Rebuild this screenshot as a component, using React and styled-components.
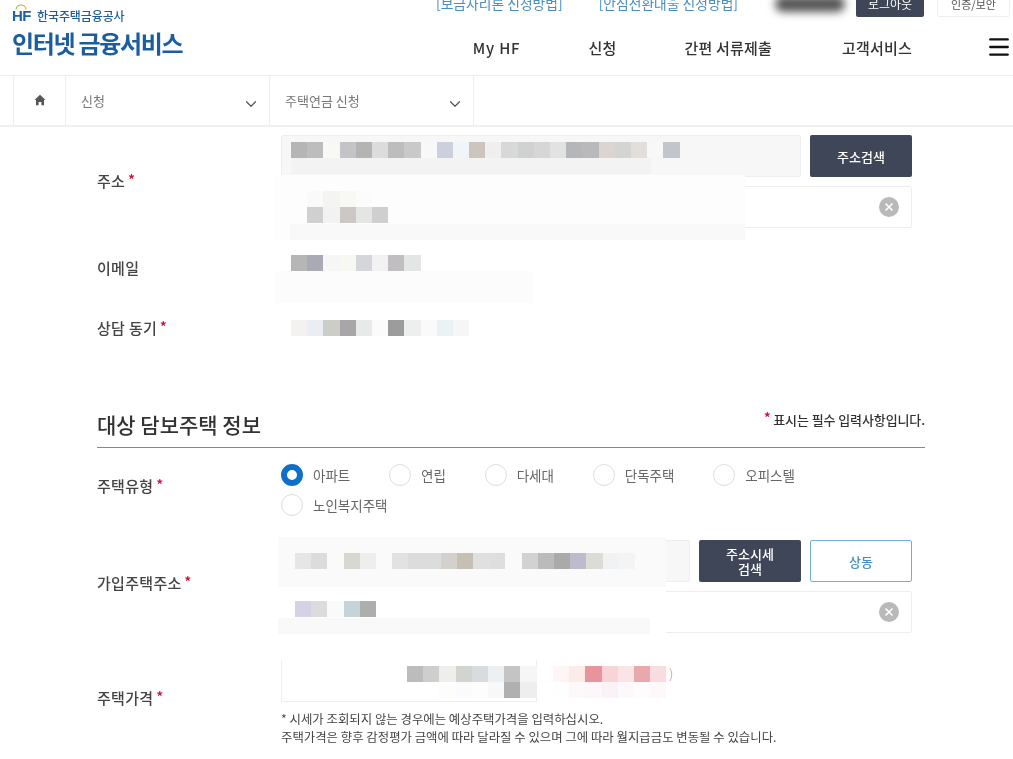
import React from "react";
import styled, { createGlobalStyle } from "styled-components";
import { ChevronDown, Menu } from "lucide-react";

const GlobalStyle = createGlobalStyle`
  html, body {
    margin: 0;
    padding: 0;
    background: #fff;
    overflow: hidden;
    font-family: "Noto Sans CJK KR", "Noto Sans", sans-serif;
    color: #333;
  }
  * { box-sizing: border-box; }
`;

const Page = styled.div`
  width: 1013px;
  height: 759px;
  overflow: hidden;
  filter: blur(0.5px);
`;

const Header = styled.header`
  display: flex;
  height: 76px;
  border-bottom: 1px solid #eeeeee;
`;
const Brand = styled.div`
  width: 300px;
  padding: 6px 0 0 12px;
`;
const OrgLine = styled.div`
  display: flex;
  align-items: center;
  gap: 6px;
  height: 18px;
  color: #1c5c9c;
  font-size: 12px;
  letter-spacing: -0.1px;
  font-weight: 500;
`;
const HfMark = styled.span`
  position: relative;
  font-family: "Liberation Sans", sans-serif;
  font-size: 15px;
  font-weight: 700;
  letter-spacing: -0.5px;
  color: #1c62a8;
`;
const HfArc = styled.svg`
  position: absolute;
  left: 3px;
  top: -3px;
`;
const ServiceName = styled.div`
  margin-top: 2px;
  font-size: 24px;
  line-height: 34px;
  font-weight: 700;
  letter-spacing: -1.3px;
  color: #1b5e9f;
`;
const HeaderRight = styled.div`
  flex: 1;
  display: flex;
  flex-direction: column;
`;
const UtilRow = styled.div`
  display: flex;
  justify-content: flex-end;
  align-items: flex-end;
  height: 17px;
  padding-right: 3px;
`;
const UtilLink = styled.a`
  margin-right: ${(p) => p.$gap}px;
  margin-bottom: 5px;
  font-size: 13.8px;
  line-height: 18px;
  color: #4a8cc4;
  white-space: nowrap;
`;
const Smudge = styled.div`
  width: 70px;
  height: 16px;
  margin-right: 11px;
  margin-bottom: 5px;
  border-radius: 8px;
  background: #555;
  filter: blur(4px);
`;
const LogoutButton = styled.button`
  width: 68px;
  height: 26px;
  margin-right: 13px;
  border: 0;
  border-radius: 2px;
  padding: 0;
  background: #3f4658;
  color: #fff;
  font: 400 12px/16px "Noto Sans CJK KR", sans-serif;
`;
const AuthButton = styled.button`
  width: 73px;
  height: 26px;
  border: 1px solid #eeeeee;
  border-radius: 2px;
  padding: 0;
  background: #fff;
  color: #555;
  font: 400 11px/16px "Noto Sans CJK KR", sans-serif;
`;
const NavRow = styled.nav`
  display: flex;
  justify-content: flex-end;
  align-items: center;
  gap: 68px;
  height: 59px;
  padding: 2px 1px 0 0;
`;
const NavItem = styled.a`
  margin-left: ${(p) => p.$left || 0}px;
  font-size: 15px;
  font-weight: 500;
  letter-spacing: 0.2px;
  color: #333;
  white-space: nowrap;
  &:first-child {
    letter-spacing: 0.8px;
  }
`;
const Burger = styled(Menu)`
  margin-left: 6px;
  color: #111;
`;

const Crumbs = styled.div`
  display: flex;
  height: 51px;
  padding-left: 13px;
  border-bottom: 2px solid #f0f0f0;
`;
const HomeCell = styled.div`
  width: 52px;
  display: flex;
  justify-content: center;
  padding-top: 18px;
  border-left: 1px solid #eeeeee;
`;
const CrumbCell = styled.div`
  width: 204px;
  display: flex;
  justify-content: space-between;
  padding: 16px 9px 0 15px;
  border-left: 1px solid #eeeeee;
  font-size: 13px;
  line-height: 18px;
  color: #777;
  &:last-child {
    width: 205px;
    border-right: 1px solid #eeeeee;
  }
`;
const CrumbChevron = styled(ChevronDown)`
  margin-top: 3px;
  color: #555;
`;

const Row = styled.div`
  display: grid;
  grid-template-columns: 184px 1fr;
  align-items: center;
  padding: 0 101px 0 97px;
  margin-top: ${(p) => p.$top || 0}px;
`;
const Label = styled.div`
  padding-bottom: ${(p) => p.$lift || 0}px;
  font-size: 15px;
  font-weight: 500;
  letter-spacing: 0.3px;
  color: #444;
`;
const Req = styled.span`
  margin-left: 3px;
  color: #d0103a;
  font-size: 13px;
  font-weight: 700;
  vertical-align: 3px;
`;
const Field = styled.div`
  position: relative;
  height: ${(p) => (p.$height ? `${p.$height}px` : "auto")};
`;
const InputLine = styled.div`
  display: flex;
  gap: 9px;
  margin-top: ${(p) => p.$top || 0}px;
`;
const ReadInput = styled.div`
  flex: 1;
  height: 42px;
  border: 1px solid #eeeeee;
  border-radius: 2px;
  background: #f7f7f7;
`;
const ClearInput = styled.div`
  flex: 1;
  height: 42px;
  display: flex;
  justify-content: flex-end;
  align-items: center;
  padding-right: 12px;
  border: 1px solid #eeeeee;
  border-radius: 2px;
  background: #fff;
`;
const DarkButton = styled.button`
  width: 102px;
  height: 42px;
  border: 0;
  border-radius: 2px;
  padding: 0 20px;
  background: #3f4658;
  color: #fff;
  font: 500 13px/15px "Noto Sans CJK KR", sans-serif;
`;
const OutlineButton = styled.button`
  width: 102px;
  height: 42px;
  border: 1px solid #6fb0d4;
  border-radius: 2px;
  background: #fff;
  color: #3f8fc0;
  font: 500 13px/15px "Noto Sans CJK KR", sans-serif;
`;

// blurred-out personal data sits over the inputs
const Patch = styled.div`
  position: absolute;
  left: ${(p) => p.$x}px;
  top: ${(p) => p.$y}px;
  width: ${(p) => p.$w}px;
  height: ${(p) => p.$h}px;
  background: ${(p) => p.$bg || "#fdfdfd"};
`;
const Mosaic = styled.div`
  position: absolute;
  left: ${(p) => p.$x}px;
  top: ${(p) => p.$y}px;
  display: flex;
  flex-direction: column;
`;
const MosaicRow = styled.div`
  display: flex;
`;
const MosaicCell = styled.i`
  display: block;
  width: 16.2px;
  height: 16px;
  background: ${(p) => p.$c};
`;
const PriceInput = styled.div`
  width: 256px;
  height: 42px;
  border: 1px solid #eeeeee;
  border-top: 0;
  background: #fff;
`;
const PinkParen = styled.span`
  position: absolute;
  left: 388px;
  top: 5px;
  font-size: 13px;
  line-height: 18px;
  color: #e8a0a8;
`;
const Note = styled.p`
  margin: 8px 0 0;
  font-size: 12.4px;
  line-height: 18px;
  color: #444;
  white-space: nowrap;
`;

const SectionHead = styled.div`
  display: flex;
  justify-content: space-between;
  height: 41px;
  margin: 50px 88px 0 97px;
  border-bottom: 1px solid #888888;
`;
const SectionTitle = styled.h2`
  margin: 0;
  font-size: 21px;
  line-height: 34px;
  font-weight: 500;
  color: #333;
`;
const RequiredNote = styled.div`
  font-size: 13px;
  line-height: 20px;
  font-weight: 500;
  letter-spacing: -0.1px;
  color: #333;
`;
const RadioGroup = styled.div`
  display: flex;
  flex-wrap: wrap;
  gap: 8px 38.8px;
`;
const RadioItem = styled.label`
  display: flex;
  align-items: center;
  gap: 10px;
  height: 22px;
  font-size: 13.5px;
  color: #666;
`;
const RadioDot = styled.span`
  width: 22px;
  height: 22px;
  border-radius: 50%;
  background: #fff;
  border: ${(p) => (p.$on ? "6px solid #0f6fc6" : "1px solid #dddddd")};
`;

const MASKS = {
  address: [
    ["#b5b5b5", "#bdbdbd", "#f8f8f4", "#c4c4c8", "#b4b4b4", "#dcdcdc", "#bdbdbd", "#c9c9c9", "#f8f8f8", "#cbd0dc", "#eef6f8", "#cdc4be", "#f0efef", "#d8d8d8", "#cfd2d0", "#d6d6d6", "#e2e2e2", "#b5b6ba", "#b9b9bb", "#dcd4ce", "#d4d5d2", "#e2dfda", "#f8f8f8", "#c0c6cb"],
  ],
  detail: [
    ["#fdfdfd", "#fafafa", "#f4f4f2", "#f8f8f4", "#fcfcfc"],
    ["#fdfdfd", "#d0d0d0", "#f2f2f2", "#ccc8c6", "#e4e6e4", "#cfcfcf"],
  ],
  email: [
    ["#b6b6b6", "#aaaab4", "#f6f6f6", "#f8f8f2", "#d4d6da", "#f2f2f2", "#c0bec0", "#e4e6e6"],
  ],
  consult: [
    ["#f4f2f0", "#eaeef2", "#ccccc8", "#a8a6a8", "#e8eaea", "#fbfbfb", "#9c9c9c", "#ecefee", "#fafafa", "#eaf2f6", "#f6f6f6"],
  ],
  house: [
    ["#e6e6e6", "#dcdcdc", "#fafafa", "#d8d8d2", "#eeeeee", "#fafafa", "#e2e2e4", "#dcdcdc", "#dcdcdc", "#d4d0cc", "#c6bfb4", "#e0e0de", "#dedede", "#fafafa", "#d2d2d2", "#bbbbbb", "#aaaaaa", "#bcbccc", "#dcdcd6", "#f0f2f4", "#f2f4f6"],
  ],
  houseDetail: [["#d4d2e4", "#dcdcdc", "#fafafa", "#c4d4d8", "#aeaeac"]],
  price: [
    ["#bcbcbc", "#cecece", "#eeeeec", "#d2d4d0", "#d8dcdc", "#ecf0f2", "#c4c4c4", "#f6f6f6"],
    ["#ffffff", "#ffffff", "#fdfdfb", "#fbfbfd", "#fdfdfd", "#f8f8f8", "#b0b0b0", "#eeeeee"],
  ],
  pink: [
    ["#fdf6f4", "#fbece8", "#e8949c", "#f8d4d6", "#fae4e6", "#e8a8ac", "#f8dce0"],
    ["#fffefe", "#fdf9fb", "#fdf6fa", "#fbf2f7", "#fdf8fb", "#fefcfd", "#fdf8fa"],
  ],
};

function Mask({ name, x, y }) {
  return (
    <Mosaic $x={x} $y={y}>
      {MASKS[name].map((cells, i) => (
        <MosaicRow key={i}>
          {cells.map((c, j) => (
            <MosaicCell key={j} $c={c} />
          ))}
        </MosaicRow>
      ))}
    </Mosaic>
  );
}

function ClearIcon() {
  return (
    <svg width="20" height="20" viewBox="0 0 20 20">
      <circle cx="10" cy="10" r="10" fill="#b9b9b9" />
      <path d="M6.5 6.5l7 7M13.5 6.5l-7 7" stroke="#fff" strokeWidth="1.6" />
    </svg>
  );
}

function HomeIcon() {
  return (
    <svg width="12" height="12" viewBox="0 0 12 12">
      <path d="M6 .8 11.5 6H10v5.2H7.4V8H4.6v3.2H2V6H.5z" fill="#555" />
    </svg>
  );
}

const RADIOS = ["아파트", "연립", "다세대", "단독주택", "오피스텔", "노인복지주택"];

export default function App() {
  return (
    <Page>
      <GlobalStyle />
      <Header>
        <Brand>
          <OrgLine>
            <HfMark>
              <HfArc width="12" height="6" viewBox="0 0 12 6">
                <path d="M1 5.5A5 5 0 0 1 6 1" fill="none" stroke="#8cc63f" strokeWidth="1.2" />
                <path d="M6 1a5 5 0 0 1 5 4.5" fill="none" stroke="#f0a030" strokeWidth="1.2" />
              </HfArc>
              HF
            </HfMark>
            한국주택금융공사
          </OrgLine>
          <ServiceName>인터넷 금융서비스</ServiceName>
        </Brand>
        <HeaderRight>
          <UtilRow>
            <UtilLink $gap={36}>[보금자리론 신청방법]</UtilLink>
            <UtilLink $gap={37}>[안심전환대출 신청방법]</UtilLink>
            <Smudge />
            <LogoutButton>로그아웃</LogoutButton>
            <AuthButton>인증/보안</AuthButton>
          </UtilRow>
          <NavRow>
            <NavItem>My HF</NavItem>
            <NavItem>신청</NavItem>
            <NavItem>간편 서류제출</NavItem>
            <NavItem $left={2}>고객서비스</NavItem>
            <Burger size={26} strokeWidth={2.2} />
          </NavRow>
        </HeaderRight>
      </Header>

      <Crumbs>
        <HomeCell>
          <HomeIcon />
        </HomeCell>
        <CrumbCell>
          신청
          <CrumbChevron size={18} strokeWidth={1.6} />
        </CrumbCell>
        <CrumbCell>
          주택연금 신청
          <CrumbChevron size={18} strokeWidth={1.6} />
        </CrumbCell>
      </Crumbs>

      <Row $top={8}>
        <Label $lift={4}>
          주소<Req>*</Req>
        </Label>
        <Field>
          <InputLine>
            <ReadInput />
            <DarkButton>주소검색</DarkButton>
          </InputLine>
          <InputLine $top={9}>
            <ClearInput>
              <ClearIcon />
            </ClearInput>
          </InputLine>
          <Patch $x={10} $y={23} $w={360} $h={16} $bg="#f3f3f3" />
          <Mask name="address" x={10} y={7} />
          <Patch $x={-6} $y={40} $w={470} $h={65}>
            <Mask name="detail" x={16} y={16} />
            <Patch $x={15} $y={49} $w={455} $h={16} $bg="#f9f9f9" />
          </Patch>
        </Field>
      </Row>

      <Row $top={9}>
        <Label>이메일</Label>
        <Field $height={60}>
          <Patch $x={-6} $y={34} $w={258} $h={32} $bg="#fcfcfc" />
          <Mask name="email" x={10} y={18} />
        </Field>
      </Row>

      <Row>
        <Label>
          상담 동기<Req>*</Req>
        </Label>
        <Field $height={60}>
          <Mask name="consult" x={10} y={23} />
        </Field>
      </Row>

      <SectionHead>
        <SectionTitle>대상 담보주택 정보</SectionTitle>
        <RequiredNote>
          <Req>*</Req> 표시는 필수 입력사항입니다.
        </RequiredNote>
      </SectionHead>

      <Row $top={16}>
        <Label $lift={10}>
          주택유형<Req>*</Req>
        </Label>
        <RadioGroup>
          {RADIOS.map((name, i) => (
            <RadioItem key={name}>
              <RadioDot $on={i === 0} />
              {name}
            </RadioItem>
          ))}
        </RadioGroup>
      </Row>

      <Row $top={24}>
        <Label $lift={10}>
          가입주택주소<Req>*</Req>
        </Label>
        <Field>
          <InputLine>
            <ReadInput />
            <DarkButton>
              주소시세
              <br />
              검색
            </DarkButton>
            <OutlineButton>상동</OutlineButton>
          </InputLine>
          <InputLine $top={9}>
            <ClearInput>
              <ClearIcon />
            </ClearInput>
          </InputLine>
          <Patch $x={-3} $y={-3} $w={388} $h={50} $bg="#fafafa" />
          <Patch $x={-3} $y={47} $w={388} $h={50} $bg="#fff" />
          <Patch $x={-3} $y={78} $w={372} $h={16} $bg="#f9f9f9" />
          <Mask name="house" x={14} y={13} />
          <Mask name="houseDetail" x={14} y={61} />
        </Field>
      </Row>

      <Row $top={27}>
        <Label $lift={12}>
          주택가격<Req>*</Req>
        </Label>
        <Field>
          <PriceInput />
          <Note>
            * 시세가 조회되지 않는 경우에는 예상주택가격을 입력하십시오.
            <br />
            주택가격은 향후 감정평가 금액에 따라 달라질 수 있으며 그에 따라 월지급금도 변동될 수 있습니다.
          </Note>
          <Mask name="price" x={126} y={6} />
          <Mask name="pink" x={272} y={6} />
          <PinkParen>)</PinkParen>
        </Field>
      </Row>
    </Page>
  );
}
